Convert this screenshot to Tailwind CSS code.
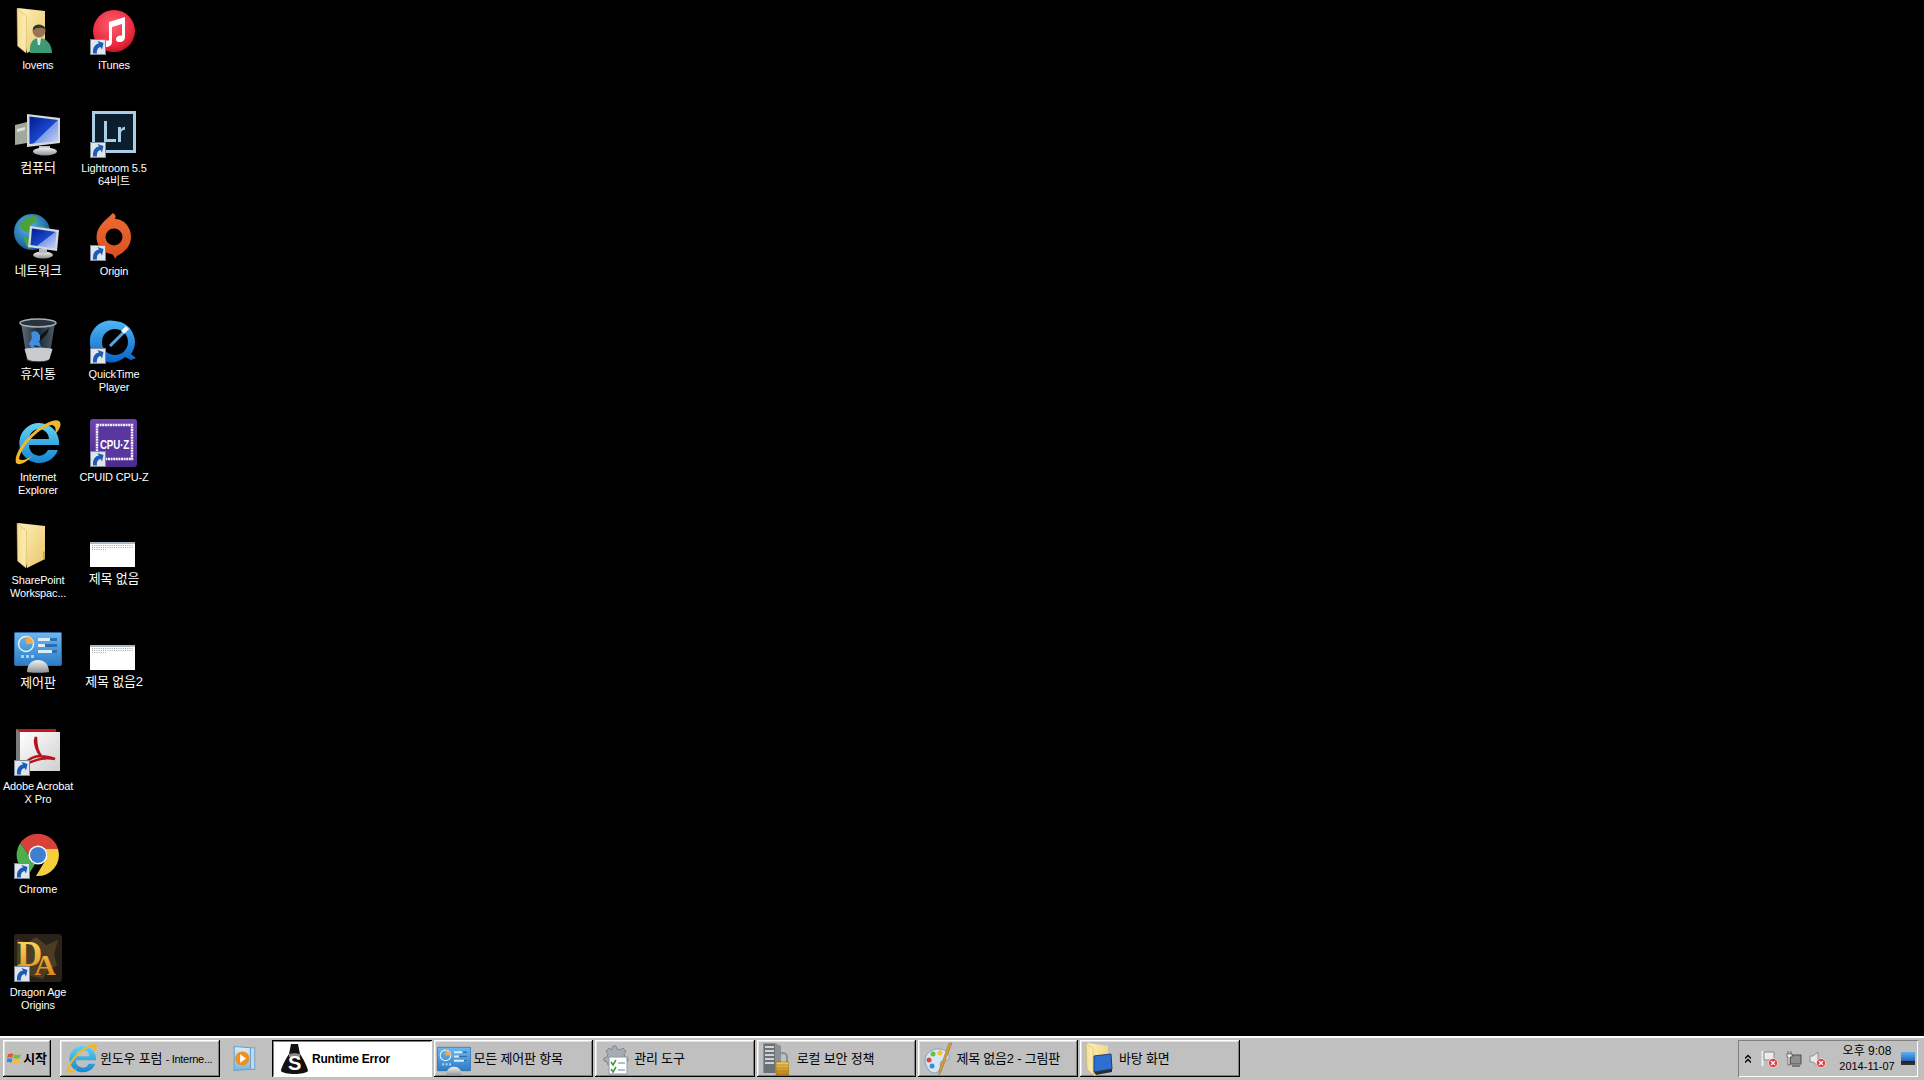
<!DOCTYPE html>
<html lang="ko">
<head>
<meta charset="utf-8">
<title>Desktop</title>
<script src="https://cdn.jsdelivr.net/npm/@tailwindcss/browser@4"></script>
</head>
<body class="m-0 bg-black overflow-hidden font-['Liberation_Sans','Noto_Sans_CJK_KR',sans-serif]">
<svg class="absolute w-0 h-0" aria-hidden="true">
  <defs>
    <linearGradient id="gFolder" x1="0" y1="0" x2="1" y2="1"><stop offset="0" stop-color="#fff2b8"/><stop offset="1" stop-color="#e9c56e"/></linearGradient>
    <linearGradient id="gFlap" x1="0" y1="0" x2="1" y2="0"><stop offset="0" stop-color="#f7dd8e"/><stop offset="1" stop-color="#fbeeb8"/></linearGradient>
    <radialGradient id="gTunes" cx=".45" cy=".35" r=".75"><stop offset="0" stop-color="#ff5f70"/><stop offset=".7" stop-color="#e8263a"/><stop offset="1" stop-color="#a80e1c"/></radialGradient>
    <linearGradient id="gScreen" x1="0" y1="0" x2="1" y2="1"><stop offset="0" stop-color="#001a90"/><stop offset=".55" stop-color="#1a48cc"/><stop offset=".57" stop-color="#7f9be8"/><stop offset="1" stop-color="#c9d6f6"/></linearGradient>
    <linearGradient id="gSilver" x1="0" y1="0" x2="0" y2="1"><stop offset="0" stop-color="#f2f2f2"/><stop offset="1" stop-color="#8c9094"/></linearGradient>
    <radialGradient id="gGlobe" cx=".4" cy=".35" r=".7"><stop offset="0" stop-color="#57b6ec"/><stop offset="1" stop-color="#10528f"/></radialGradient>
    <linearGradient id="gOrigin" x1="0" y1="0" x2="0" y2="1"><stop offset="0" stop-color="#ee6a33"/><stop offset="1" stop-color="#d9501f"/></linearGradient>
    <linearGradient id="gQt" x1="0" y1="0" x2="0" y2="1"><stop offset="0" stop-color="#4fb6f4"/><stop offset="1" stop-color="#0a62c8"/></linearGradient>
    <linearGradient id="gBin" x1="0" y1="0" x2="1" y2="0"><stop offset="0" stop-color="#5f6f7b"/><stop offset=".5" stop-color="#1b2a38"/><stop offset="1" stop-color="#4e5c68"/></linearGradient>
    <linearGradient id="gIe" x1="0" y1="0" x2="0" y2="1"><stop offset="0" stop-color="#63d3f5"/><stop offset="1" stop-color="#1486cf"/></linearGradient>
    <linearGradient id="gCpu" x1="0" y1="0" x2="0" y2="1"><stop offset="0" stop-color="#6d45ad"/><stop offset="1" stop-color="#4b2a8a"/></linearGradient>
    <linearGradient id="gCp" x1="0" y1="0" x2="0" y2="1"><stop offset="0" stop-color="#6db8ee"/><stop offset="1" stop-color="#2c7cc7"/></linearGradient>
    <linearGradient id="gAcro" x1="0" y1="0" x2="1" y2="1"><stop offset="0" stop-color="#ffffff"/><stop offset="1" stop-color="#cfcfcf"/></linearGradient>
    <linearGradient id="gGold" x1="0" y1="0" x2="0" y2="1"><stop offset="0" stop-color="#ffe566"/><stop offset="1" stop-color="#d9780f"/></linearGradient>
    <linearGradient id="gWmp" x1="0" y1="0" x2="0" y2="1"><stop offset="0" stop-color="#d8effb"/><stop offset="1" stop-color="#7db4dc"/></linearGradient>
    <linearGradient id="gLock" x1="0" y1="0" x2="0" y2="1"><stop offset="0" stop-color="#f3ce63"/><stop offset="1" stop-color="#b9801c"/></linearGradient>
    <linearGradient id="gTray" x1="0" y1="0" x2="0" y2="1"><stop offset="0" stop-color="#5fb0ef"/><stop offset=".7" stop-color="#1f66c0"/><stop offset=".72" stop-color="#222"/><stop offset="1" stop-color="#333"/></linearGradient>

    <symbol id="shortcut" viewBox="0 0 16 16">
      <rect x=".5" y=".5" width="15" height="15" fill="#dfe5ec" stroke="#7e8794"/>
      <path d="M3 14.500C2.500 8 5.500 5 9 4.500L7.500 2l6 2-1.500 6.500-1.500-2.500C8 8.500 6.500 11 7 14.500z" fill="#1c5cb6"/>
    </symbol>

    <symbol id="folder" viewBox="0 0 48 48">
      <path d="M4 1 31 4V37L13 46z" fill="url(#gFolder)"/>
      <path d="M3 1 12.500 9 12 46 3.500 39z" fill="url(#gFlap)" stroke="#c9a654" stroke-width=".5"/>
    </symbol>

    <symbol id="ie" viewBox="0 0 48 48">
      <path d="M25 4A20 20 0 0 1 45 26H15A10 10 0 0 0 34 31H44A20 20 0 1 1 25 4zM15 20H35A10 10 0 0 0 15 20z" fill="url(#gIe)" fill-rule="evenodd"/>
      <path d="M2 44C-1 32 20 8 38 2C44 0 48 2 46 8C45 11 43 13 41 15C42 10 42 7 38 6C26 8 8 26 5 40C8 42 12 41 18 37C12 44 5 47 2 44z" fill="#eeb72f"/>
    </symbol>

    <symbol id="cp" viewBox="0 0 48 48">
      <rect x=".5" y="7.500" width="47" height="33" rx="1" fill="url(#gCp)" stroke="#2a6aa8"/>
      <circle cx="12" cy="19" r="7.500" fill="none" stroke="#e8f2fb" stroke-width="1.500"/>
      <path d="M12 11.500a7.500 7.500 0 0 1 7.500 7.500H12z" fill="#f0a94e"/>
      <path d="M24 13h19v3H24zM24 19h19v3H24zM24 25h19v3H24z" fill="#dcecf9"/>
      <path d="M36 13h7v3h-7zM31 19h12v3H31zM38 25h5v3h-5z" fill="#2c6fb0"/>
      <path d="M7 30h3v3H7zM12 30h3v3h-3zM17 30h3v3h-3z" fill="#9fd4f5"/>
      <path d="M13 47c0-8 5-12 11-12s11 4 11 12c-3 1-19 1-22 0z" fill="url(#gSilver)"/>
    </symbol>

    <symbol id="thumb" viewBox="0 0 48 48">
      <rect x="0" y="20" width="45" height="25" fill="#ffffff"/>
      <rect x="0" y="20" width="45" height="2" fill="#a9b9c4"/>
      <path d="M2 23.500h41M2 25.500h41M2 27.500h14" stroke="#8f8f8f" stroke-width=".8" stroke-dasharray="1 1.200"/>
    </symbol>

    <symbol id="redx" viewBox="0 0 10 10">
      <circle cx="5" cy="5" r="4.500" fill="#dd3b3b" stroke="#fff" stroke-width=".6"/>
      <path d="M3 3l4 4M7 3 3 7" stroke="#fff" stroke-width="1.300"/>
    </symbol>
  </defs>
</svg>

<div class="h-[1080px] w-[1924px] flex flex-col">
  <main class="h-[1036px] grid grid-flow-col grid-cols-[76px_76px] grid-rows-[repeat(10,103px)] justify-start text-white text-[11px] leading-[13px] tracking-[-0.15px] text-center">

    <!-- column 1 -->
    <div class="pt-[7px] flex flex-col items-center">
      <svg class="w-12 h-12" viewBox="0 0 48 48"><use href="#folder"/><path d="M16 46c-1-10 3-15 9-15s13 5 13 15z" fill="#3a9a73"/><path d="M23 31h4l-1 7h-2z" fill="#e9e9e2"/><circle cx="25" cy="24" r="6.500" fill="#9a7455"/><path d="M19 23c-1-7 12-7 13 0-3-3-9-3-13 0z" fill="#243b30"/></svg>
      <div class="mt-[4px]">lovens</div>
    </div>
    <div class="pt-[7px] flex flex-col items-center text-[13px] leading-[13px] tracking-[-0.2px]">
      <svg class="w-12 h-12" viewBox="0 0 48 48"><path d="M1 15 13 12V33L1 35z" fill="#a2a79c"/><path d="M3 19l8-2v3l-8 2z" fill="#e0e2dc"/><path d="M13 4 46 8V33L13 37z" fill="#d5d8dc"/><path d="M15.500 6.500 44 10V31L15.500 34z" fill="url(#gScreen)"/><path d="M25 36h11v5H25z" fill="#b8bcc0"/><ellipse cx="31" cy="41.500" rx="12" ry="4" fill="url(#gSilver)"/></svg>
      <div class="mt-[3px]">컴퓨터</div>
    </div>
    <div class="pt-[7px] flex flex-col items-center text-[13px] leading-[13px] tracking-[-0.2px]">
      <svg class="w-12 h-12" viewBox="0 0 48 48"><circle cx="18" cy="19" r="18" fill="url(#gGlobe)"/><path d="M5 12c4-6 10-9 17-9 3 3 0 7-4 8-2 4-1 8-5 9-4-2-6-5-8-8zM10 24c4 0 8 2 9 6-1 4-3 6-4 6-3-3-5-8-5-12zM24 14c4-2 8 0 9 4l-6 3z" fill="#4ba23a"/><ellipse cx="29" cy="42" rx="10" ry="3.500" fill="url(#gSilver)"/><path d="M25 36h8v4h-8z" fill="#b7babd"/><path d="M16 13 45 17 43 38 14 34z" fill="#d5d8dc"/><path d="M18 15.500 42.500 19 41 35.500 16.500 32z" fill="url(#gScreen)"/></svg>
      <div class="mt-[3px]">네트워크</div>
    </div>
    <div class="pt-[7px] flex flex-col items-center text-[13px] leading-[13px] tracking-[-0.2px]">
      <svg class="w-12 h-12" viewBox="0 0 48 48"><path d="M7 7 13 44c3 3 19 3 22 0L41 7z" fill="url(#gBin)"/><path d="M10.500 33c6-2 20-2 28 0l-3 10c-3 3-19 3-22 0z" fill="#c9ccce"/><path d="M17 17c3-3 7-2 8 1l3 4-3 3 2 6-6-2-3 4-3-5c1-3 4-4 2-11z" fill="#3f8ee0"/><path d="M26 20l9-8-2 6-7 7z" fill="#0c1218"/><ellipse cx="24" cy="7" rx="18" ry="4" fill="#27343f" stroke="#a9b0b6" stroke-width="1.500"/></svg>
      <div class="mt-[3px]">휴지통</div>
    </div>
    <div class="pt-[7px] flex flex-col items-center">
      <svg class="w-12 h-12" viewBox="0 0 48 48"><use href="#ie"/></svg>
      <div class="mt-[4px]">Internet<br>Explorer</div>
    </div>
    <div class="pt-[7px] flex flex-col items-center">
      <svg class="w-12 h-12" viewBox="0 0 48 48"><use href="#folder"/><path d="M29 30l2-1v8l-2 1z" fill="#c8a85a"/></svg>
      <div class="mt-[4px]">SharePoint<br>Workspac...</div>
    </div>
    <div class="pt-[7px] flex flex-col items-center text-[13px] leading-[13px] tracking-[-0.2px]">
      <svg class="w-12 h-12" viewBox="0 0 48 48"><use href="#cp"/></svg>
      <div class="mt-[3px]">제어판</div>
    </div>
    <div class="pt-[7px] flex flex-col items-center">
      <div class="relative w-12 h-12">
        <svg class="w-12 h-12" viewBox="0 0 48 48"><path d="M2 1H42V5H2z" fill="#c8141c"/><path d="M2 1 6 4V43L2 41z" fill="#7b7b7b"/><rect x="6" y="4" width="40" height="39" fill="url(#gAcro)"/><path d="M22 9c-3 6 2 16 5 19-5 0-12 2-16 8 8-2 16-8 30-5-7-3-12-2-14-3-3-4-5-10-5-19z" fill="none" stroke="#b8141c" stroke-width="2.500"/></svg>
        <svg class="absolute left-0 bottom-0 w-4 h-4"><use href="#shortcut"/></svg>
      </div>
      <div class="mt-[4px]">Adobe Acrobat<br>X Pro</div>
    </div>
    <div class="pt-[7px] flex flex-col items-center">
      <div class="relative w-12 h-12">
        <svg class="w-12 h-12" viewBox="0 0 48 48"><path d="M6.300 12A21 21 0 0 1 44 18H24a9 9 0 0 0-9 6.500z" fill="#d9403a"/><path d="M6.300 12 15 24.500a9 9 0 0 0 6 8.500l-6 10A21 21 0 0 1 6.300 12z" fill="#4cae4f"/><path d="M44 18A21 21 0 0 1 22 45L31 30a9 9 0 0 0 0-12z" fill="#f7cf3d"/><circle cx="24" cy="24" r="9.500" fill="#fff"/><circle cx="24" cy="24" r="8" fill="#3f7fd0"/></svg>
        <svg class="absolute left-0 bottom-0 w-4 h-4"><use href="#shortcut"/></svg>
      </div>
      <div class="mt-[4px]">Chrome</div>
    </div>
    <div class="pt-[7px] flex flex-col items-center">
      <div class="relative w-12 h-12">
        <svg class="w-12 h-12" viewBox="0 0 48 48"><rect width="48" height="48" rx="3" fill="#2a2218"/><path d="M3 5l10 4 9-6 10 8 12-5-4 14 3 12-8 3-6 10-12-3-10 2-4-13z" fill="#4b3c24"/><text x="3" y="32" font-family="'Liberation Serif',serif" font-size="35" font-weight="700" fill="url(#gGold)"><tspan>D</tspan><tspan dx="-8" dy="9" font-size="30">A</tspan></text></svg>
        <svg class="absolute left-0 bottom-0 w-4 h-4"><use href="#shortcut"/></svg>
      </div>
      <div class="mt-[4px]">Dragon Age<br>Origins</div>
    </div>

    <!-- column 2 -->
    <div class="pt-[7px] flex flex-col items-center">
      <div class="relative w-12 h-12">
        <svg class="w-12 h-12" viewBox="0 0 48 48"><circle cx="24" cy="24" r="21" fill="url(#gTunes)"/><path d="M19 15 35 10V30c0 3.500-3 5.500-6 5-3 0-4-3-2-5 1.500-1.500 3.500-1.800 5-1.500V17l-10 3V35c0 3.500-3 5-6 5-3-.5-4-3-2-5 1.500-1.500 3-1.800 5-1.500z" fill="#fff"/></svg>
        <svg class="absolute left-0 bottom-0 w-4 h-4"><use href="#shortcut"/></svg>
      </div>
      <div class="mt-[4px]">iTunes</div>
    </div>
    <div class="pt-[7px] flex flex-col items-center">
      <div class="relative w-12 h-12">
        <svg class="w-12 h-12" viewBox="0 0 48 48"><rect x="3.500" y="2.500" width="41" height="39" fill="#0c1e2e" stroke="#a9cde4" stroke-width="3"/><path d="M14 11h3v18h9v3H14zM28 17h3v2.500c1-2 2.500-2.700 4-2.700v3c-2.500 0-4 1-4 4V32h-3z" fill="#a9cde4"/></svg>
        <svg class="absolute left-0 bottom-0 w-4 h-4"><use href="#shortcut"/></svg>
      </div>
      <div class="mt-[4px]">Lightroom 5.5<br>64비트</div>
    </div>
    <div class="pt-[7px] flex flex-col items-center">
      <div class="relative w-12 h-12">
        <svg class="w-12 h-12" viewBox="0 0 48 48"><path d="M23 0c3 2 3 4 2 6 9 0 16 8 16 18 0 8-5 13-9 16-3 2-6 3-7 6-1-3-2-5-4-5C13 40 6.500 33 6.500 24 6.500 13 16 7 23 0z" fill="url(#gOrigin)"/><circle cx="24" cy="24" r="8.500" fill="#000"/></svg>
        <svg class="absolute left-0 bottom-0 w-4 h-4"><use href="#shortcut"/></svg>
      </div>
      <div class="mt-[4px]">Origin</div>
    </div>
    <div class="pt-[7px] flex flex-col items-center">
      <div class="relative w-12 h-12">
        <svg class="w-12 h-12" viewBox="0 0 48 48"><path d="M25 5a21 21 0 0 1 16 33l5 4-5 2-6-3A21 21 0 1 1 25 5zm0 8a13 13 0 1 0 0 26 13 13 0 0 0 0-26z" fill="url(#gQt)" fill-rule="evenodd"/><path d="M20 30 33 17" stroke="#4fa8ea" stroke-width="3"/><path d="M31 15l5-5 3 3-5 5z" fill="#eef8ff"/></svg>
        <svg class="absolute left-0 bottom-0 w-4 h-4"><use href="#shortcut"/></svg>
      </div>
      <div class="mt-[4px]">QuickTime<br>Player</div>
    </div>
    <div class="pt-[7px] flex flex-col items-center">
      <div class="relative w-12 h-12">
        <svg class="w-12 h-12" viewBox="0 0 48 48"><rect x="0" y="0" width="47" height="48" rx="3" fill="url(#gCpu)"/><path d="M7 6h35v34H7z" fill="#5a36a0" stroke="#f4f0fa" stroke-width="2.500" stroke-dasharray="2 .6"/><text transform="translate(24.500 30) scale(.75 1)" text-anchor="middle" font-family="'Liberation Sans',sans-serif" font-size="13" font-weight="700" fill="#fff">CPU·Z</text></svg>
        <svg class="absolute left-0 bottom-0 w-4 h-4"><use href="#shortcut"/></svg>
      </div>
      <div class="mt-[4px]">CPUID CPU-Z</div>
    </div>
    <div class="pt-[7px] flex flex-col items-center text-[13px] leading-[13px] tracking-[-0.2px]">
      <svg class="w-12 h-12" viewBox="0 0 48 48"><use href="#thumb"/></svg>
      <div class="mt-[2px]">제목 없음</div>
    </div>
    <div class="pt-[7px] flex flex-col items-center text-[13px] leading-[13px] tracking-[-0.2px]">
      <svg class="w-12 h-12" viewBox="0 0 48 48"><use href="#thumb"/></svg>
      <div class="mt-[2px]">제목 없음2</div>
    </div>
  </main>

  <footer class="h-[44px] border-t-2 border-white bg-[#c0c0c0] flex items-start pt-[2px] text-black text-[13px] tracking-[-0.2px]">
    <button class="ml-[3px] w-[48px] h-[37px] flex items-center justify-center gap-[1px] font-bold bg-[#c0c0c0] shadow-[inset_-1px_-1px_0_#000,inset_1px_1px_0_#fff,inset_-2px_-2px_0_#808080,inset_2px_2px_0_#dfdfdf]">
      <svg class="w-[15px] h-[15px] shrink-0" viewBox="0 0 14 14"><path d="M1 3c2-1 4-1 5 0L5 6.500c-1-1-3-1-5 0z" fill="#e5562f"/><path d="M7 3c2 1 4 1 6 0l-1 3.500c-2 1-4 1-6 0z" fill="#7dbb3c"/><path d="M0 7.500c2-1 4-1 5 0L4 11c-1-1-3-1-5 0z" fill="#3a89d8"/><path d="M6 7.500c2 1 4 1 6 0L11 11c-2 1-4 1-6 0z" fill="#f1bf2f"/></svg>
      <span class="whitespace-nowrap">시작</span>
    </button>

    <button class="ml-[9px] w-[160px] h-[37px] flex items-center text-left bg-[#c0c0c0] shadow-[inset_-1px_-1px_0_#000,inset_1px_1px_0_#fff,inset_-2px_-2px_0_#808080,inset_2px_2px_0_#dfdfdf]">
      <svg class="ml-[6px] w-[32px] h-[32px] shrink-0" viewBox="0 0 48 48"><use href="#ie"/></svg>
      <span class="ml-[2px] whitespace-nowrap">윈도우 포럼 <span class="text-[11px] tracking-[-0.3px]">- Interne...</span></span>
    </button>

    <div class="w-[52px] h-[37px] flex items-center justify-start pl-[12px]">
      <svg class="w-[26px] h-[29px]" viewBox="0 0 24 26"><path d="M5 3h16v20H5z" fill="#bcd9ef" stroke="#7aa6c9"/><path d="M2 2l15 1v20L2 24z" fill="url(#gWmp)" stroke="#6f9fc4"/><circle cx="9.500" cy="13" r="6.500" fill="#ef8f1e"/><path d="M7.500 9 13 13l-5.500 4z" fill="#fff"/></svg>
    </div>

    <div class="flex gap-[2px]">
      <button class="w-[159.6px] h-[37px] flex items-center text-left font-bold bg-white shadow-[inset_1px_1px_0_#000,inset_-1px_-1px_0_#fff,inset_2px_2px_0_#808080]">
        <svg class="ml-[9px] w-[27px] h-[32px] shrink-0" viewBox="0 0 27 32"><path d="M10 1h7l2 10c4 6 8 14 8 17-3 4-24 4-27 0 0-3 4-11 8-17z" fill="#111"/><path d="M8 11c3-1 8-1 11 0v3H8z" fill="#888"/><text x="13.500" y="27" text-anchor="middle" font-family="'Liberation Sans',sans-serif" font-size="20" font-weight="700" fill="#fff">S</text></svg>
        <span class="ml-[4px] whitespace-nowrap text-xs tracking-[-0.2px]">Runtime Error</span>
      </button>
      <button class="w-[159.6px] h-[37px] flex items-center text-left bg-[#c0c0c0] shadow-[inset_-1px_-1px_0_#000,inset_1px_1px_0_#fff,inset_-2px_-2px_0_#808080,inset_2px_2px_0_#dfdfdf]">
        <svg class="ml-[3px] w-[34px] h-[34px] shrink-0" viewBox="0 0 48 48"><use href="#cp"/></svg>
        <span class="ml-[3px] whitespace-nowrap">모든 제어판 항목</span>
      </button>
      <button class="w-[159.6px] h-[37px] flex items-center text-left bg-[#c0c0c0] shadow-[inset_-1px_-1px_0_#000,inset_1px_1px_0_#fff,inset_-2px_-2px_0_#808080,inset_2px_2px_0_#dfdfdf]">
        <svg class="ml-[5px] w-[32px] h-[32px] shrink-0" viewBox="0 0 32 32"><path d="M13 3l3 0 1 3 3 1 3-2 3 3-2 3 1 3 3 1v3l-3 1-1 3H8l-1-3-3-1v-3l3-1 1-3-2-3 3-3 3 2z" fill="#a5acb4" stroke="#7e868e"/><rect x="9" y="14" width="18" height="17" fill="#fff" stroke="#8d99a6"/><path d="M11 19l2 3 3-5M11 26l2 3 3-5" fill="none" stroke="#3d9a3d" stroke-width="1.500"/><path d="M18 20h7M18 27h7" stroke="#6b7e94"/></svg>
        <span class="ml-[2px] whitespace-nowrap">관리 도구</span>
      </button>
      <button class="w-[159.6px] h-[37px] flex items-center text-left bg-[#c0c0c0] shadow-[inset_-1px_-1px_0_#000,inset_1px_1px_0_#fff,inset_-2px_-2px_0_#808080,inset_2px_2px_0_#dfdfdf]">
        <svg class="ml-[6px] w-[26px] h-[34px] shrink-0" viewBox="0 0 26 34"><path d="M0 1h12l6 3v28l-6-1H0z" fill="#8b9197"/><path d="M1 2h11v29H1z" fill="#6a7177"/><path d="M2 4h9v2H2zM2 8h9v2H2zM2 12h9v2H2zM2 16h9v2H2zM2 20h9v2H2z" fill="#d0d4d6"/><path d="M16 20v-5a4 4 0 0 1 8 0v5" fill="none" stroke="#8a8f92" stroke-width="2"/><rect x="13" y="20" width="13" height="13" fill="url(#gLock)" stroke="#8c6010" stroke-width=".5"/><path d="M13 23h13M13 26h13M13 29h13" stroke="#a87515" stroke-width=".6"/></svg>
        <span class="ml-[8px] whitespace-nowrap">로컬 보안 정책</span>
      </button>
      <button class="w-[159.6px] h-[37px] flex items-center text-left bg-[#c0c0c0] shadow-[inset_-1px_-1px_0_#000,inset_1px_1px_0_#fff,inset_-2px_-2px_0_#808080,inset_2px_2px_0_#dfdfdf]">
        <svg class="ml-[5px] w-[32px] h-[34px] shrink-0" viewBox="0 0 32 34"><path d="M2 20C1 11 10 6 17 7c7 1 10 5 9 9-1 3-5 3-7 3-3 1-1 5-2 8-2 4-6 5-9 3-3-2-5-6-6-10z" fill="#d6e7f3" stroke="#7da1bb"/><circle cx="17" cy="11" r="2.500" fill="#f0c22e"/><circle cx="10" cy="12" r="2.500" fill="#6dbb3f"/><circle cx="6" cy="18" r="2.500" fill="#d94a3a"/><circle cx="9" cy="24" r="2.500" fill="#3c8ad6"/><path d="M29 1 18 30l-2 3 0-4L26 1z" fill="#d99a3f" stroke="#9c6b22" stroke-width=".5"/></svg>
        <span class="ml-[1px] whitespace-nowrap">제목 없음2 - 그림판</span>
      </button>
      <button class="w-[159.6px] h-[37px] flex items-center text-left bg-[#c0c0c0] shadow-[inset_-1px_-1px_0_#000,inset_1px_1px_0_#fff,inset_-2px_-2px_0_#808080,inset_2px_2px_0_#dfdfdf]">
        <svg class="ml-[5px] w-[28px] h-[34px] shrink-0" viewBox="0 0 28 34"><path d="M2 1 23 4v26L9 34z" fill="url(#gFolder)"/><path d="M1 1 8 6v27L2 27z" fill="url(#gFlap)" stroke="#c9a654" stroke-width=".5"/><path d="M9 14 26 12 27 27 9 30z" fill="#2f6fd0" stroke="#1c3f6e"/><path d="M9 30 27 27 27 30 11 33z" fill="#25303c"/></svg>
        <span class="ml-[6px] whitespace-nowrap">바탕 화면</span>
      </button>
    </div>

    <div class="ml-auto mr-[6px] w-[180px] h-[37px] flex items-center shadow-[inset_1px_1px_0_#808080,inset_-1px_-1px_0_#fff]">
      <svg class="ml-[7px] w-[6px] h-[10px] shrink-0" viewBox="0 0 6 10"><path d="M0 4.500 3 1.500l3 3M0 8.500l3-3 3 3" fill="none" stroke="#000" stroke-width="1.300"/></svg>
      <svg class="ml-[10px] w-[17px] h-[18px] shrink-0" viewBox="0 0 17 18"><path d="M1.500 1v15" stroke="#efefef" stroke-width="2"/><path d="M3 2h10v8H3z" fill="#ececec" stroke="#8e8e8e"/><svg x="7" y="8" width="10" height="10"><use href="#redx"/></svg></svg>
      <svg class="ml-[7px] w-[17px] h-[18px] shrink-0" viewBox="0 0 17 18"><rect x="5" y="5" width="11" height="9" fill="#8f8f8f" stroke="#4f4f4f"/><path d="M3 1v3M6 1v3M2 4h5v3H5v8H3V7H2z" fill="#f3f3f3" stroke="#333" stroke-width=".6"/><path d="M7 16h8" stroke="#333"/></svg>
      <svg class="ml-[7px] w-[17px] h-[18px] shrink-0" viewBox="0 0 17 18"><path d="M1 6h3l5-4v14l-5-4H1z" fill="#e8e8e8" stroke="#8e8e8e"/><svg x="7" y="8" width="10" height="10"><use href="#redx"/></svg></svg>
      <div class="ml-[11px] w-[60px] shrink-0 text-center text-[11px] leading-[15px] tracking-normal">
        <div class="text-xs">오후 9:08</div>
        <div>2014-11-07</div>
      </div>
      <svg class="ml-[4px] w-[14px] h-[13px] shrink-0" viewBox="0 0 14 13"><rect width="14" height="13" fill="url(#gTray)"/></svg>
    </div>
  </footer>
</div>
</body>
</html>
